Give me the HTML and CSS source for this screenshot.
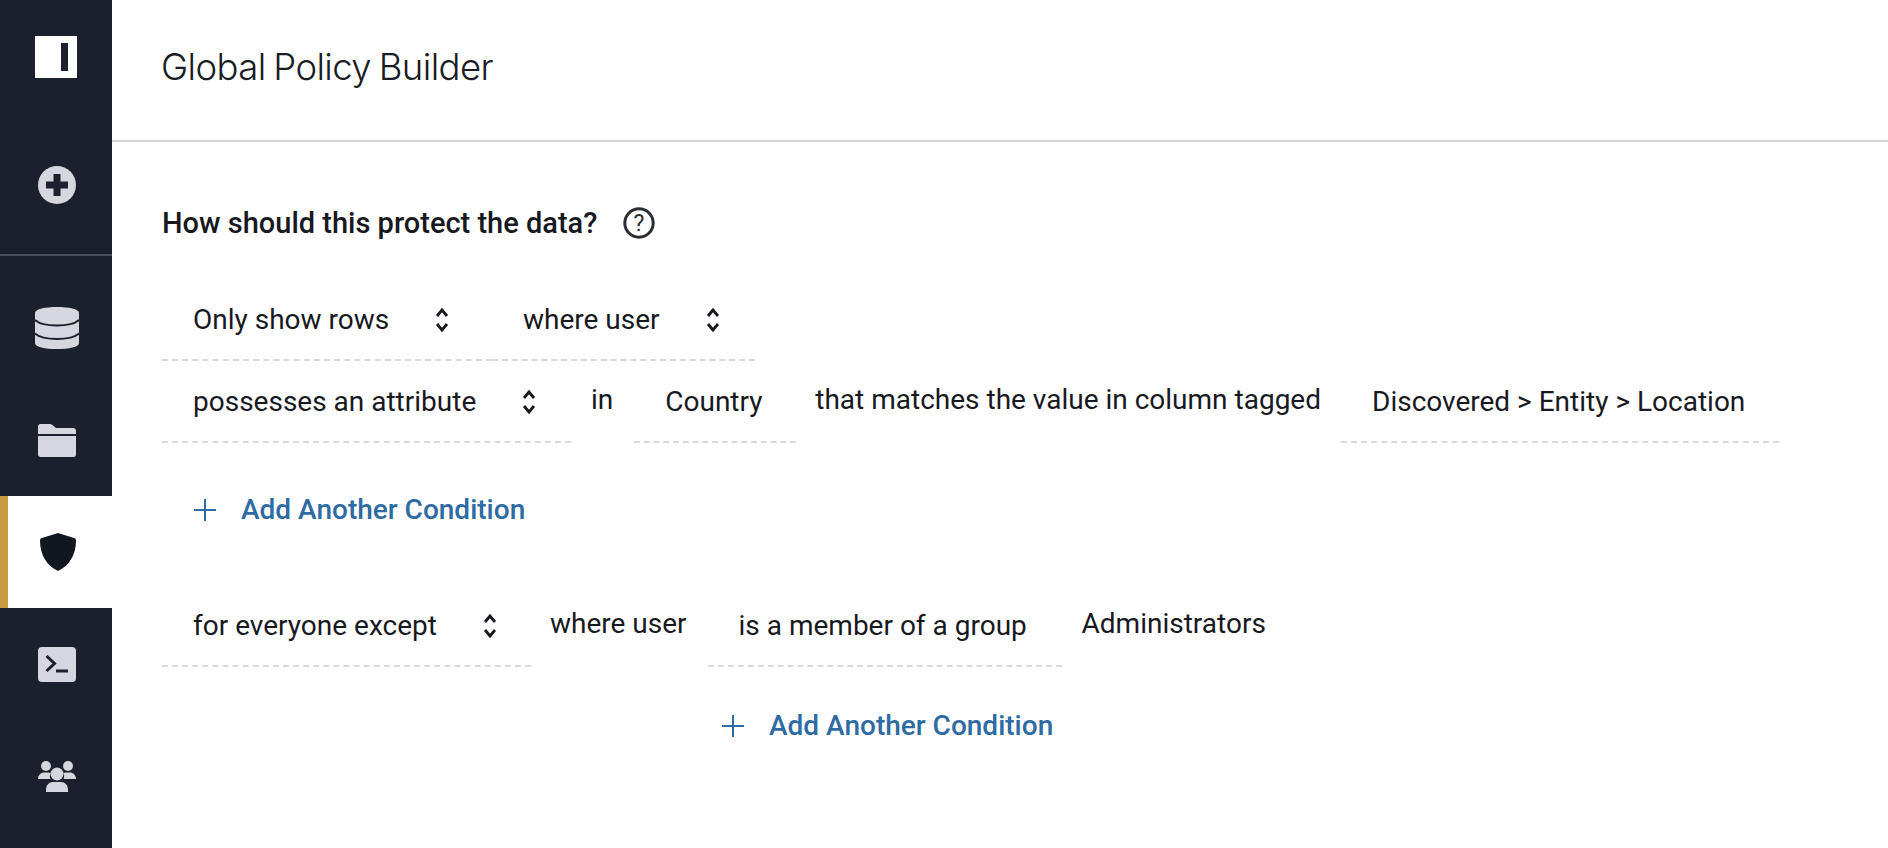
FILE: index.html
```html
<!DOCTYPE html>
<html lang="en">
<head>
<meta charset="utf-8">
<title>Global Policy Builder</title>
<link rel="stylesheet" href="styles.css">
</head>
<body>
<div class="app">
  <nav class="rail">
    <div class="rail-item logo-item">
      <svg class="logo" viewBox="0 0 42 42"><rect width="42" height="42" fill="#fff"/><rect x="26" y="7" width="7" height="28" fill="#1b1f2e"/></svg>
    </div>
    <div class="rail-item add-item">
      <svg class="icon" viewBox="0 0 38 38"><circle cx="19" cy="19" r="19" fill="#d5d6de"/><path d="M15.500 8h7v7.500h7.500v7h-7.500v7.500h-7v-7.500h-7.500v-7h7.500z" fill="#1b1f2e"/></svg>
    </div>
    <div class="rail-item db-item">
      <svg class="icon wide" viewBox="0 0 44 42"><path d="M0 6C0 2 10 0 22 0s22 2 22 6v30c0 4-10 6-22 6S0 40 0 36z" fill="#d5d6de"/><path d="M0 13c4 4 12 5.500 22 5.500S40 17 44 13M0 26.500c4 4 12 5.500 22 5.500s18-1.500 22-5.500" fill="none" stroke="#1b1f2e" stroke-width="2"/></svg>
    </div>
    <div class="rail-item">
      <svg class="icon folder" viewBox="0 0 38 33"><path d="M0 2.500C0 1 1 0 2.500 0h9c1.500 0 2.500.5 3.500 1.500L18 4h17c2 0 3 1 3 3v3H0z" fill="#d5d6de"/><path d="M0 12h38v18.500c0 1.500-1 2.500-2.500 2.500h-33C1 33 0 32 0 30.500z" fill="#d5d6de"/></svg>
    </div>
    <div class="rail-item active">
      <svg class="icon" viewBox="0 0 36 38"><path d="M18 0l16 5c1 .3 2 1.200 2 2.500C36 22 29 33 18 38 7 33 0 22 0 7.500 0 6.200 1 5.300 2 5z" fill="#12161f"/></svg>
    </div>
    <div class="rail-item">
      <svg class="icon terminal" viewBox="0 0 38 35"><rect width="38" height="35" rx="4" fill="#d5d6de"/><path d="M8.500 9l8 7.500-8 7.500" fill="none" stroke="#1b1f2e" stroke-width="3"/><path d="M18 24h12" stroke="#1b1f2e" stroke-width="3"/></svg>
    </div>
    <div class="rail-item">
      <svg class="icon people" viewBox="0 0 38 31"><circle cx="8" cy="5" r="5" fill="#d5d6de"/><circle cx="30" cy="5" r="5" fill="#d5d6de"/><path d="M0 18c0-4 3-6.500 6-6.500h4c1 0 2 .3 2.500.8-.7 1.500-1 3.700 0 5.700z" fill="#d5d6de"/><path d="M38 18c0-4-3-6.500-6-6.500h-4c-1 0-2 .3-2.500.8.700 1.500 1 3.700 0 5.700z" fill="#d5d6de"/><circle cx="19" cy="13" r="6.500" fill="#d5d6de"/><path d="M8 31v-2c0-5 3-8 7-8h8c4 0 7 3 7 8v2z" fill="#d5d6de"/></svg>
    </div>
  </nav>
  <main class="main">
    <header class="topbar"><h1 class="title">Global Policy Builder</h1></header>
    <section class="builder">
      <div class="question">
        <h2 class="question-text">How should this protect the data?</h2>
        <svg class="help" viewBox="0 0 32 32"><circle cx="16" cy="16" r="14.200" fill="none" stroke="#2b2d33" stroke-width="3"/><text x="16" y="24" text-anchor="middle" class="help-mark">?</text></svg>
      </div>

      <div class="row row-first">
        <div class="field w-first"><span>Only show rows</span><svg class="updown" viewBox="0 0 14 26"><path d="M2 9l5-6 5 6M2 17l5 6 5-6"/></svg></div>
        <div class="field w-second"><span>where user</span><svg class="updown" viewBox="0 0 14 26"><path d="M2 9l5-6 5 6M2 17l5 6 5-6"/></svg></div>
      </div>

      <div class="row">
        <div class="field w-possess"><span>possesses an attribute</span><svg class="updown" viewBox="0 0 14 26"><path d="M2 9l5-6 5 6M2 17l5 6 5-6"/></svg></div>
        <span class="word w-in">in</span>
        <div class="field w-country"><span>Country</span></div>
        <span class="word w-match">that matches the value in column tagged</span>
        <div class="field w-tag"><span>Discovered &gt; Entity &gt; Location</span></div>
      </div>

      <div class="add add-first">
        <svg class="plus" viewBox="0 0 24 24"><path d="M12 1v22M1 12h22"/></svg>
        <span>Add Another Condition</span>
      </div>

      <div class="row row-except">
        <div class="field w-except"><span>for everyone except</span><svg class="updown" viewBox="0 0 14 26"><path d="M2 9l5-6 5 6M2 17l5 6 5-6"/></svg></div>
        <span class="word w-where">where user</span>
        <div class="field w-member"><span>is a member of a group</span></div>
        <span class="word w-admin">Administrators</span>
      </div>

      <div class="add add-second">
        <svg class="plus" viewBox="0 0 24 24"><path d="M12 1v22M1 12h22"/></svg>
        <span>Add Another Condition</span>
      </div>
    </section>
  </main>
</div>
</body>
</html>
```

FILE: styles.css
```css
* { box-sizing: border-box; }
html, body { margin: 0; height: 100%; overflow: hidden; background: #fff; }
body { font-family: Roboto, "Liberation Sans", sans-serif; color: #17191f; }
.app { display: flex; height: 848px; }

.rail { width: 112px; flex: none; background: #1b1f2e; display: flex; flex-direction: column; }
.rail-item { height: 112px; display: flex; align-items: center; justify-content: center; flex: none; padding-left: 2px; }
.logo-item { height: 114px; padding-left: 0; }
.logo { width: 42px; height: 42px; }
.add-item { height: 142px; border-bottom: 2px solid #4a4d5b; padding-top: 2px; }
.db-item { margin-top: 16px; }
.icon { width: 38px; height: 38px; }
.icon.wide { width: 44px; height: 42px; }
.icon.folder { height: 33px; }
.icon.terminal { height: 35px; }
.icon.people { height: 31px; }
.active { background: #fff; box-shadow: inset 8px 0 0 #c79a3d; padding-left: 4px; }

.main { flex: 1; min-width: 0; }
.topbar { height: 142px; border-bottom: 2px solid #d3d3d5; padding: 46px 0 0 49px; }
.title { margin: 0; font-family: Inter, sans-serif; font-weight: 300; font-size: 36.500px; line-height: 42px; color: #1a1c24; letter-spacing: -0.6px; word-spacing: -2px; }

.builder { padding: 0 0 0 50px; }
.question { display: flex; align-items: center; gap: 26px; height: 62px; margin-top: 50px; }
.question-text { margin: 0; font-size: 29px; font-weight: 500; line-height: 62px; color: #17191f; }
.help { width: 32px; height: 32px; }
.help-mark { font-family: Roboto, sans-serif; font-size: 23px; fill: #2b2d33; }

.row { display: flex; align-items: flex-start; height: 82px; }
.row-first { margin-top: 25px; }
.field { display: flex; align-items: center; height: 82px; padding: 2px 31px 0; border-bottom: 2px dashed #d7d9dc; font-size: 28px; line-height: 32px; flex: none; }
.updown { width: 14px; height: 26px; margin-left: 46px; flex: none; fill: none; stroke: #17191f; stroke-width: 2.800; }
.word { font-size: 28px; line-height: 32px; padding-top: 23px; flex: none; }

.w-first { width: 330px; }
.w-second { width: 263px; }
.w-possess { width: 409px; }
.w-in { margin-left: 20px; }
.w-country { margin-left: 21px; width: 162px; }
.w-match { margin-left: 19px; }
.w-tag { margin-left: 20px; width: 438px; }

.add { display: flex; align-items: center; gap: 24px; font-size: 28px; font-weight: 500; line-height: 32px; color: #2e6ba3; }
.plus { width: 24px; height: 24px; flex: none; fill: none; stroke: #2e6ba3; stroke-width: 2; }
.add-first { padding-left: 31px; margin-top: 51px; }
.add-second { padding-left: 559px; margin-top: 43px; }
.row-except { margin-top: 59px; }

.w-except { width: 369px; }
.w-where { margin-left: 19px; }
.w-member { margin-left: 21px; width: 354px; }
.w-admin { margin-left: 20px; }
```
